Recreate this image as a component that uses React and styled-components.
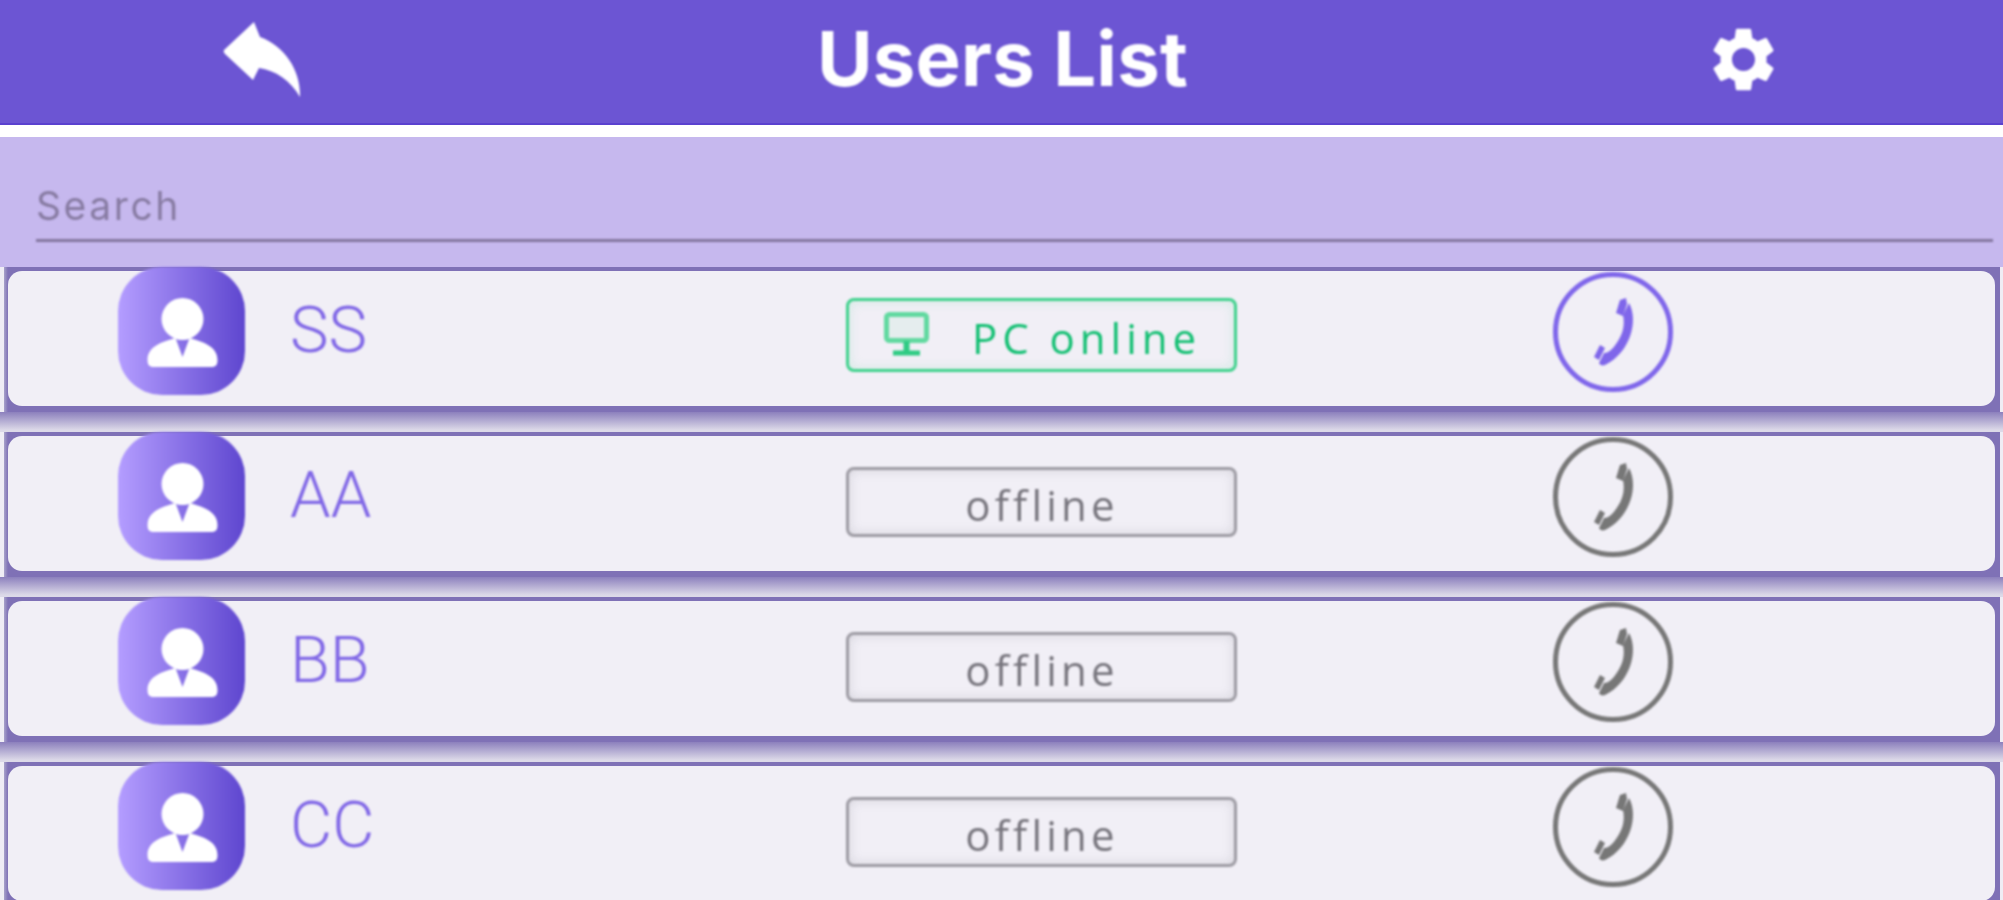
import React from 'react'
import styled, { createGlobalStyle, css } from 'styled-components'
import { MdSettings } from 'react-icons/md'

const GlobalStyle = createGlobalStyle`
  html, body {
    margin: 0;
    padding: 0;
    background: #ffffff;
    overflow: hidden;
  }
`

// the source picture is a soft upscale, so the contents carry a slight blur
const soft = css`
  filter: blur(0.8px);
`

const Page = styled.div`
  width: 2003px;
  height: 900px;
  overflow: hidden;
  display: flex;
  flex-direction: column;
  background: #e4e1ee;
  font-family: Roboto, 'Liberation Sans', sans-serif;
`

const Header = styled.header`
  flex: none;
  height: 123px;
  display: flex;
  align-items: center;
  background: #6c55d3;
  border-bottom: 2px solid #5a41cf;
`

const BackIcon = styled.svg`
  ${soft}
  flex: none;
  width: 78px;
  height: 78px;
  margin-left: 223px;
  margin-top: -3px;
`

const Title = styled.h1`
  ${soft}
  flex: none;
  width: 370px;
  margin: -8px 0 0 516px;
  color: #ffffff;
  font-family: Inter, Roboto, sans-serif;
  font-size: 76px;
  font-weight: 700;
  letter-spacing: 0.2px;
  line-height: 1;
  white-space: nowrap;
`

const GearSlot = styled.div`
  ${soft}
  flex: none;
  display: flex;
  margin: -4px 0 0 518px;
  color: #ffffff;
  font-size: 77px;
`

const WhiteStrip = styled.div`
  flex: none;
  height: 12px;
  background: #ffffff;
`

const SearchPanel = styled.div`
  flex: none;
  height: 130px;
  box-sizing: border-box;
  padding: 46px 10px 0 36px;
  background: #c6b8ee;
`

const SearchField = styled.div`
  ${soft}
  height: 59px;
  box-sizing: border-box;
  border-bottom: 3px solid #83769f;
  color: #877ba2;
  font-family: Inter, Roboto, sans-serif;
  font-size: 39px;
  letter-spacing: 2.6px;
  line-height: 46px;
`

const List = styled.div`
  flex: none;
  display: flex;
  flex-direction: column;
`

const Row = styled.div`
  flex: none;
  height: 165px;
  box-sizing: border-box;
  padding: 0 3px 0 4px;
  background: linear-gradient(
    to bottom,
    #efedf5 0,
    #efedf5 145px,
    #8c80bd 145px,
    #dcd9e8 163px,
    #dcd9e8 165px
  );
`

const Frame = styled.div`
  height: 145px;
  box-sizing: border-box;
  padding: 4px 5px 6px 4px;
  background: linear-gradient(to right, #a8a2ca 0, #7f71b6 4px);
`

const Card = styled.div`
  height: 135px;
  display: flex;
  align-items: flex-start;
  background: #f1eff6;
  border-radius: 14px;
`

const Avatar = styled.div`
  ${soft}
  flex: none;
  width: 127px;
  height: 128px;
  margin: -4px 0 0 110px;
  display: flex;
  border-radius: 44px;
  background: linear-gradient(to right, #b49dff, #5e46cf);
`

const AvatarIcon = styled.svg`
  width: 100%;
  height: 100%;
`

const Name = styled.div`
  ${soft}
  flex: none;
  width: 556px;
  margin: 21px 0 0 45px;
  color: #8067e6;
  font-size: 65px;
  font-weight: 300;
  line-height: 76px;
`

const Badge = styled.div`
  ${soft}
  flex: none;
  width: 391px;
  height: ${(p) => (p.$online ? 74 : 70)}px;
  margin-top: ${(p) => (p.$online ? 27 : 31)}px;
  padding-left: ${(p) => (p.$online ? 9 : 1)}px;
  box-sizing: border-box;
  display: flex;
  align-items: center;
  justify-content: center;
  border: 3px solid ${(p) => (p.$online ? '#3fd18c' : '#9d9ba3')};
  border-radius: 8px;
  color: ${(p) => (p.$online ? '#12bf72' : '#77757d')};
  font-family: 'Open Sans', 'Noto Sans', sans-serif;
  font-size: 42px;
  letter-spacing: ${(p) => (p.$online ? 5 : 4.2)}px;
  line-height: 1;
  box-shadow: inset 0 0 12px ${(p) => (p.$online ? 'rgba(63, 209, 140, 0.18)' : 'rgba(120, 120, 130, 0.22)')};
`

const MonitorIcon = styled.svg`
  flex: none;
  width: 46px;
  height: 44px;
  margin: -2px 42px 0 -7px;
`

const BadgeText = styled.span`
  margin-top: ${(p) => (p.$online ? 5 : 6)}px;
`

const CallButton = styled.div`
  ${soft}
  flex: none;
  width: 120px;
  height: 120px;
  margin: 1px 0 0 316px;
  box-sizing: border-box;
  border: 5px solid ${(p) => p.$color};
  border-radius: 50%;
  color: ${(p) => p.$color};
`

const PhoneIcon = styled.svg`
  display: block;
  width: 110px;
  height: 110px;
`

const users = [
  { name: 'SS', online: true },
  { name: 'AA', online: false },
  { name: 'BB', online: false },
  { name: 'CC', online: false },
]

const Back = () => (
  <BackIcon viewBox="0 0 78 78">
    <path
      d="M31 1 L1 29 Q0 31 2 33 L30 59 L36 47 C52 49 68 60 77 76 C78 50 62 25 37 16 Z"
      fill="#fff"
    />
  </BackIcon>
)

const Person = () => (
  <AvatarIcon viewBox="0 0 126 128">
    <circle cx="64" cy="52" r="21" fill="#fff" />
    <path
      d="M29 93 C29 82 38 76 57 71 L64 90 L71 71 C90 76 99 82 99 93 C99 98 97 100 93 100 L35 100 C31 100 29 98 29 93 Z"
      fill="#fff"
    />
  </AvatarIcon>
)

const Monitor = () => (
  <MonitorIcon viewBox="0 0 46 44" fill="rgba(85, 215, 154, 0.08)" stroke="#62d9a0">
    <rect x="2.5" y="2.5" width="40" height="26" rx="3" strokeWidth="5" />
    <path d="M22.5 29 V40" strokeWidth="6" stroke="#2fcb84" />
    <path d="M9 41 H36" strokeWidth="5" stroke="#2fcb84" />
  </MonitorIcon>
)

const Phone = () => (
  <PhoneIcon viewBox="0 0 110 110" fill="currentColor">
    <path d="M58 36 L62 23 L68 21 L69 27 L65 39 Z" />
    <path d="M71 26 C81 44 72 76 47 88 C44 89 42 88 41 86 L46 76 C52 76 56 70 60 64 C65 56 67 48 65 38 Z" />
    <path d="M36 80 L42 68 L47 71 L41 83 Z" />
  </PhoneIcon>
)

export default function App() {
  return (
    <Page>
      <GlobalStyle />
      <Header>
        <Back />
        <Title>Users List</Title>
        <GearSlot>
          <MdSettings />
        </GearSlot>
      </Header>
      <WhiteStrip />
      <SearchPanel>
        <SearchField>Search</SearchField>
      </SearchPanel>
      <List>
        {users.map((user) => (
          <Row key={user.name}>
            <Frame>
              <Card>
                <Avatar>
                  <Person />
                </Avatar>
                <Name>{user.name}</Name>
                <Badge $online={user.online}>
                  {user.online && <Monitor />}
                  <BadgeText $online={user.online}>{user.online ? 'PC online' : 'offline'}</BadgeText>
                </Badge>
                <CallButton $color={user.online ? '#7f66ea' : '#777777'}>
                  <Phone />
                </CallButton>
              </Card>
            </Frame>
          </Row>
        ))}
      </List>
    </Page>
  )
}
